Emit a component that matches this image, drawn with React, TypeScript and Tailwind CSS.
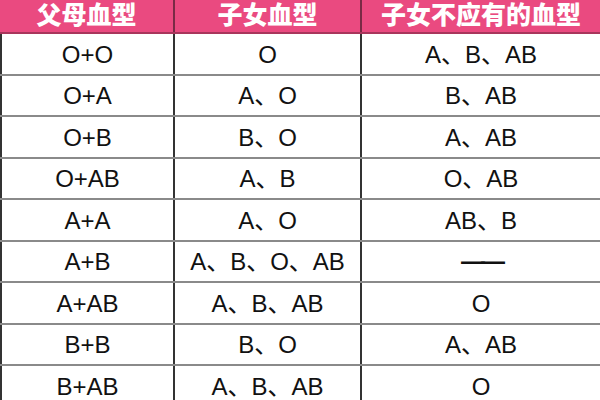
import React from "react";

const rows: [string, string, string][] = [
  ["O+O", "O", "A、B、AB"],
  ["O+A", "A、O", "B、AB"],
  ["O+B", "B、O", "A、AB"],
  ["O+AB", "A、B", "O、AB"],
  ["A+A", "A、O", "AB、B"],
  ["A+B", "A、B、O、AB", "——"],
  ["A+AB", "A、B、AB", "O"],
  ["B+B", "B、O", "A、AB"],
  ["B+AB", "A、B、AB", "O"],
];

const App: React.FC = () => {
  return (
    <div
      className="w-[600px] h-[400px] overflow-hidden bg-white"
      style={{ fontFamily: '"Liberation Sans", "Noto Sans CJK SC", sans-serif' }}
    >
      <div className="flex h-[34px] bg-[#ea4a80] border-b-2 border-[#a8365c] text-white text-[25px] font-black">
        <div className="w-[175px] flex items-center justify-center border-r-2 border-[#7a2a45]">
          父母血型
        </div>
        <div className="w-[187px] flex items-center justify-center border-r-2 border-[#7a2a45]">
          子女血型
        </div>
        <div className="flex-1 flex items-center justify-center">子女不应有的血型</div>
      </div>
      {rows.map((r, i) => (
        <div
          key={i}
          className="flex h-[41.5px] border-b-2 border-[#8a8a8a] text-[24px] text-[#111]"
        >
          <div className="w-[175px] flex items-center justify-center pt-[2px] border-l-2 border-r-2 border-[#333]">
            {r[0]}
          </div>
          <div className="w-[187px] flex items-center justify-center pt-[2px] border-r-2 border-[#333]">
            {r[1]}
          </div>
          <div
            className={
              r[2] === "——"
                ? "flex-1 flex items-center justify-center font-bold tracking-[-4px]"
                : "flex-1 flex items-center justify-center pt-[2px]"
            }
          >
            {r[2]}
          </div>
        </div>
      ))}
    </div>
  );
};

export default App;
